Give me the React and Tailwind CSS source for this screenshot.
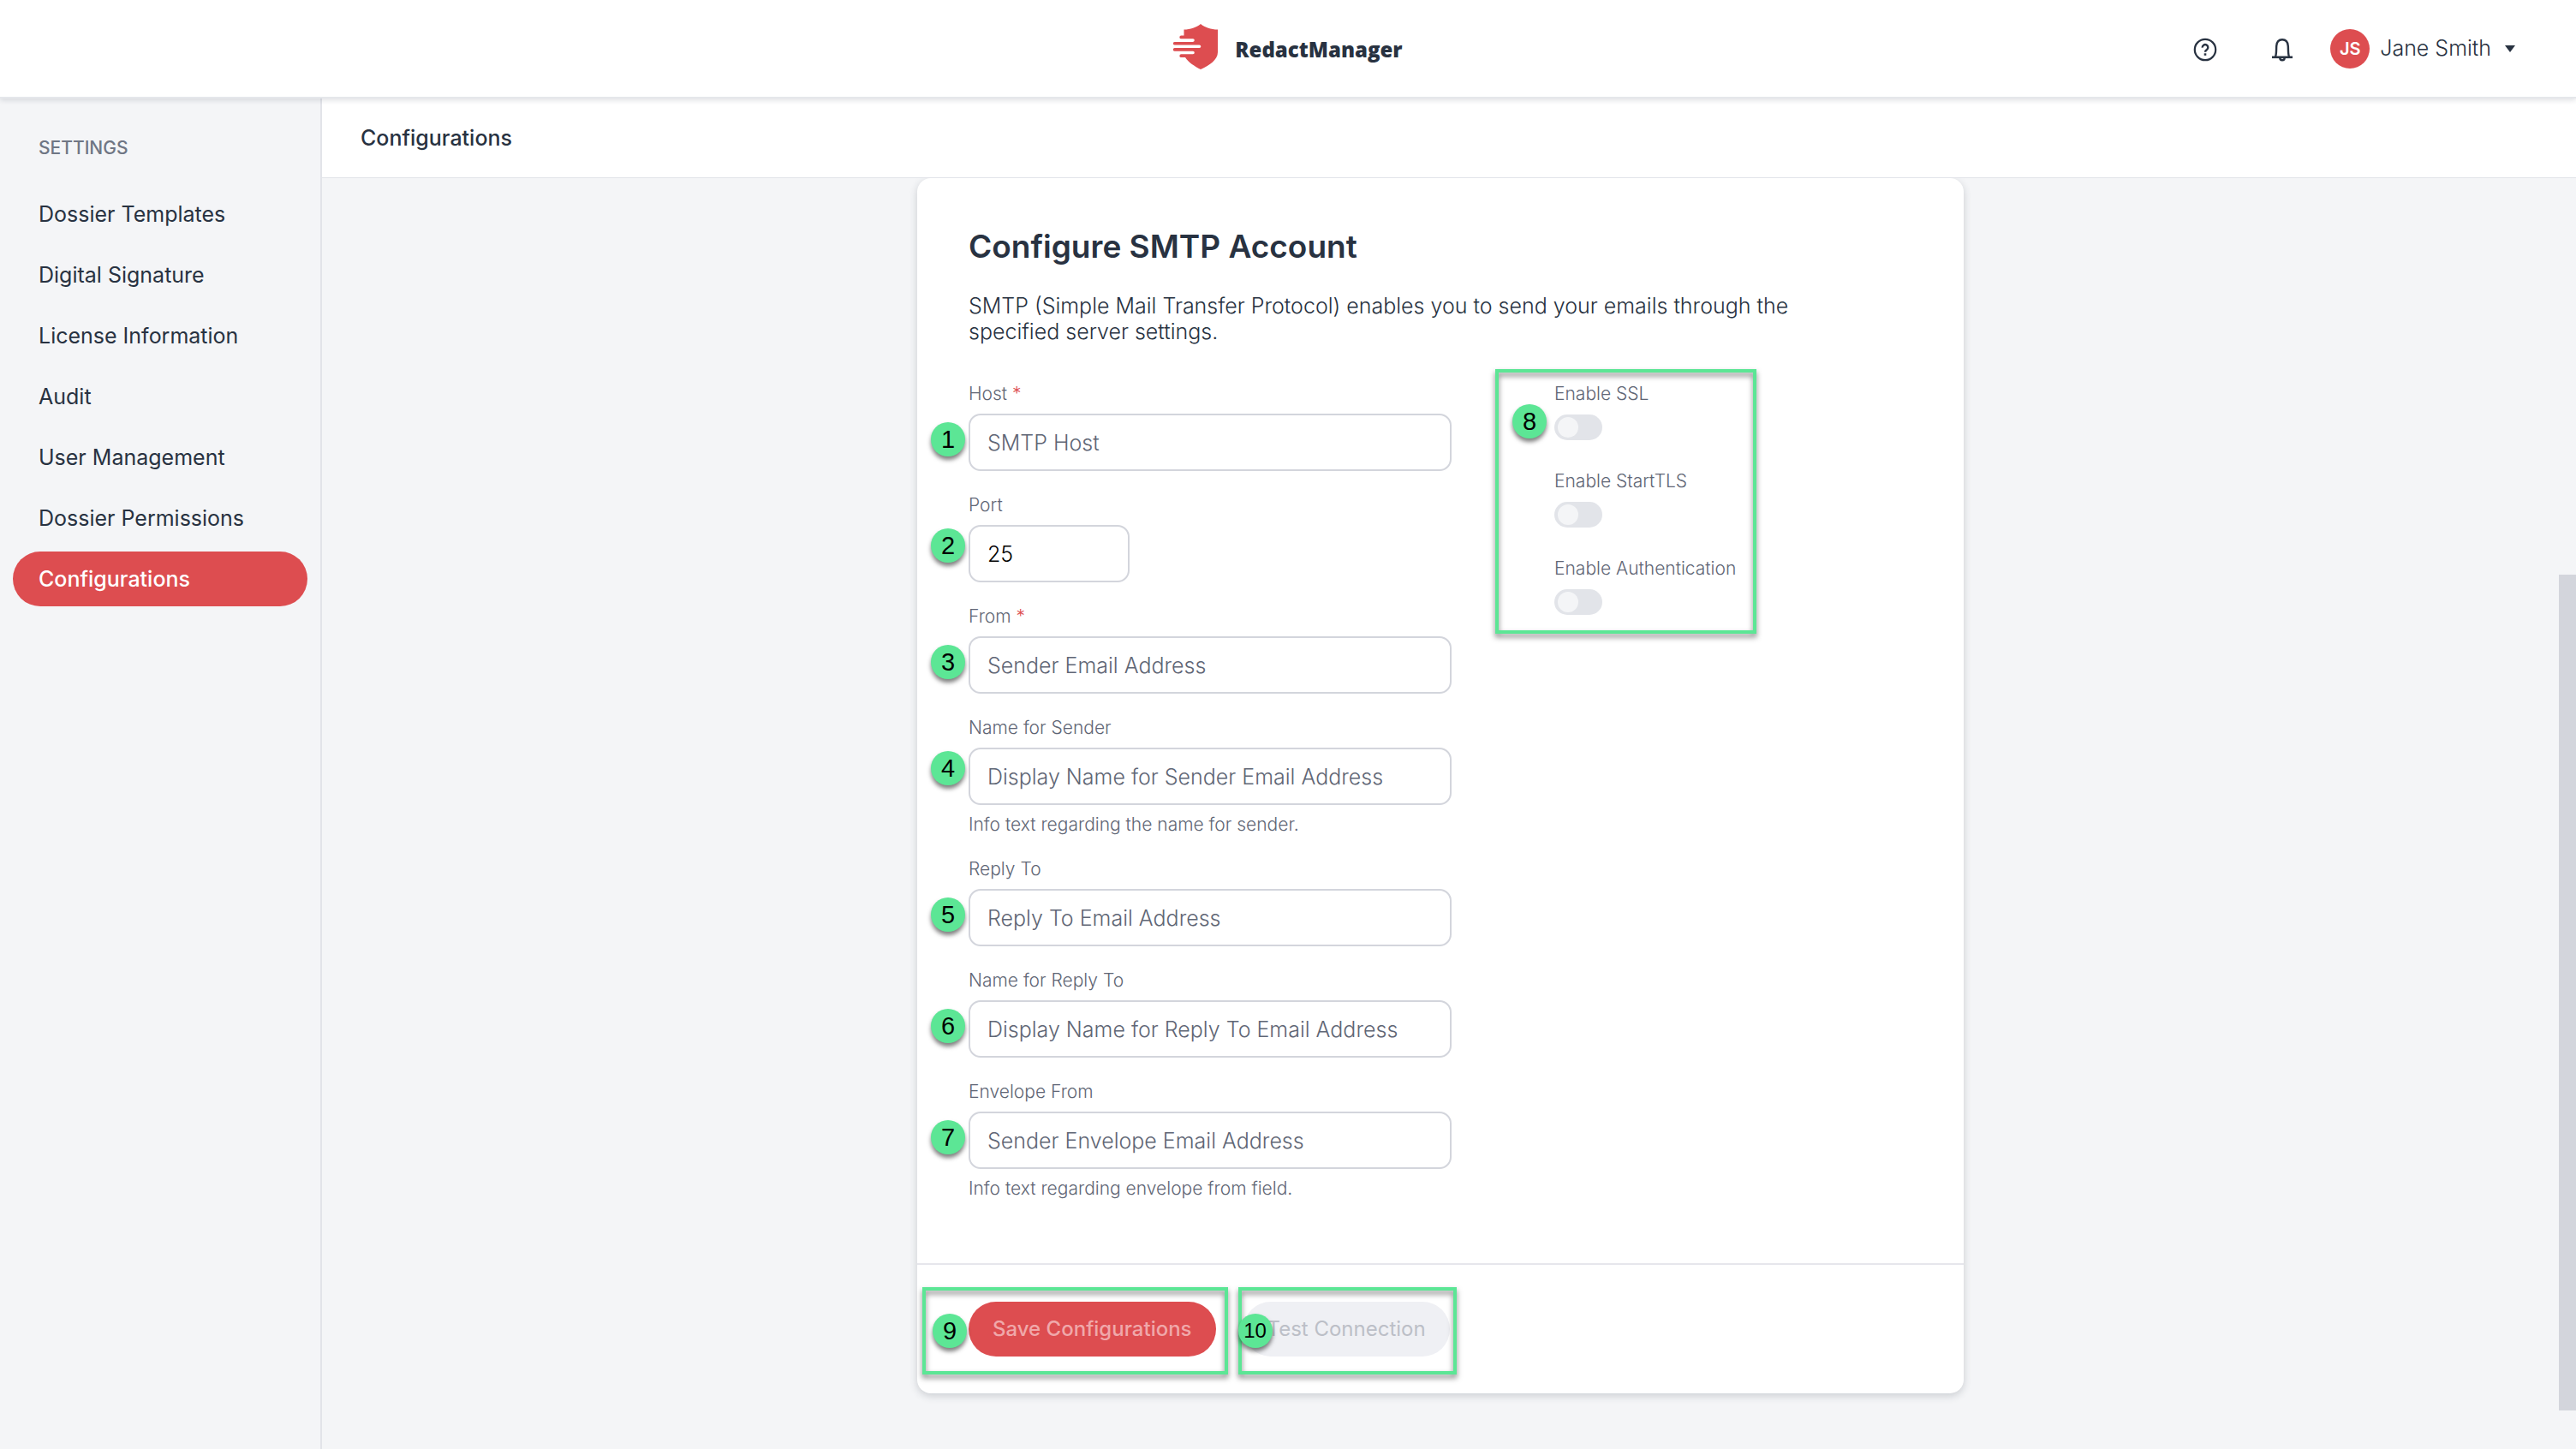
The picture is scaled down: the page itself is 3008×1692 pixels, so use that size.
import { useState } from 'react'

const NAV_ITEMS = [
  'Dossier Templates',
  'Digital Signature',
  'License Information',
  'Audit',
  'User Management',
  'Dossier Permissions',
  'Configurations',
]

const FIELDS = [
  { id: 'host', label: 'Host', required: true, placeholder: 'SMTP Host', note: 1 },
  { id: 'port', label: 'Port', value: '25', narrow: true, note: 2, noteHigh: true },
  { id: 'from', label: 'From', required: true, placeholder: 'Sender Email Address', note: 3 },
  {
    id: 'fromName',
    label: 'Name for Sender',
    placeholder: 'Display Name for Sender Email Address',
    hint: 'Info text regarding the name for sender.',
    note: 4,
    noteHigh: true,
  },
  { id: 'replyTo', label: 'Reply To', placeholder: 'Reply To Email Address', note: 5 },
  { id: 'replyToName', label: 'Name for Reply To', placeholder: 'Display Name for Reply To Email Address', note: 6 },
  {
    id: 'envelopeFrom',
    label: 'Envelope From',
    placeholder: 'Sender Envelope Email Address',
    hint: 'Info text regarding envelope from field.',
    note: 7,
  },
]

const TOGGLES = [
  { id: 'ssl', label: 'Enable SSL' },
  { id: 'starttls', label: 'Enable StartTLS' },
  { id: 'auth', label: 'Enable Authentication' },
]

function Logo() {
  return (
    <svg viewBox="0 0 52 53" className="w-[52px] h-[53px]" aria-hidden="true">
      <path
        d="M32 0C37 4 44 6.500 52 6.500V33C52 42 42 48.500 32 53C25 49.500 18 45 14 39H9.200a1.700 1.700 0 0 1 0-3.700H23a1.800 1.800 0 0 0 0-3.600H1.700a1.700 1.700 0 0 1 0-3.600H30.500a1.800 1.800 0 0 0 0-3.600H1.700a1.700 1.700 0 0 1 0-3.600H23a1.800 1.800 0 0 0 0-3.600H9.200a1.700 1.700 0 0 1 0-3.700H12.500V6.500C20 6.500 27 4 32 0Z"
        fill="#dd4d50"
      />
    </svg>
  )
}

function HelpIcon() {
  return (
    <svg viewBox="0 0 28 28" className="size-7" fill="none" stroke="currentColor" aria-hidden="true">
      <circle cx="14" cy="14" r="12.200" strokeWidth="2.200" />
      <path d="M10.700 11.600a3.300 3.300 0 1 1 5.200 2.500c-1.200.8-1.900 1.400-1.900 2.700" strokeWidth="2.400" />
      <path d="M14 18.300v2.500" strokeWidth="2.600" />
    </svg>
  )
}

function BellIcon() {
  return (
    <svg viewBox="0 0 24 28" className="w-6 h-7" fill="none" stroke="currentColor" aria-hidden="true">
      <path d="M4 22.300C5.300 19 4.900 15 5.200 9.800 5.500 5.200 8 2.200 12 2.200s6.500 3 6.800 7.600C19.100 15 18.700 19 20 22.300" strokeWidth="2.400" />
      <path d="M0 22.800H24" strokeWidth="2.600" />
      <path d="M9.300 23.500a2.700 2.700 0 0 0 5.400 0" strokeWidth="2.400" />
    </svg>
  )
}

function Note({ n, className }) {
  return (
    <span
      className={`absolute z-10 size-10 rounded-full bg-[#5ce695] text-black text-center font-['Liberation_Sans',sans-serif] leading-10 shadow-[0_4px_5px_rgba(0,0,0,0.5)] ${
        n > 9 ? 'text-2xl' : 'text-[29px]'
      } ${className}`}
    >
      {n}
    </span>
  )
}

function Outline({ className }) {
  return (
    <div
      className={`absolute pointer-events-none border-4 border-[#5ce695] drop-shadow-[0_4px_3px_rgba(0,0,0,0.5)] ${className}`}
    />
  )
}

function Field({ field }) {
  const [value, setValue] = useState(field.value ?? '')
  return (
    <div>
      <label htmlFor={field.id} className="block text-[21px] leading-6 font-light text-[#5f6675]">
        {field.label}
        {field.required && <span className="text-[#dd4d50]"> *</span>}
      </label>
      <div className="relative mt-[11px]">
        <Note n={field.note} className={field.noteHigh ? '-left-11 top-1' : '-left-11 top-2.5'} />
        <input
          id={field.id}
          type="text"
          value={value}
          placeholder={field.placeholder}
          onChange={(e) => setValue(e.target.value)}
          className={`block h-[67px] rounded-[14px] border-2 border-[#d3d5dc] bg-white px-5 text-[25px] font-light text-black placeholder:text-[#5f6675] outline-none ${
            field.narrow ? 'w-[188px]' : 'w-full'
          }`}
        />
      </div>
      {field.hint && <p className="mt-[11px] text-[21px] leading-6 font-light text-[#5f6675]">{field.hint}</p>}
    </div>
  )
}

function Toggle({ item }) {
  return (
    <div>
      <label htmlFor={item.id} className="block text-[21px] leading-6 font-light text-[#5f6675] whitespace-nowrap">
        {item.label}
      </label>
      <input
        id={item.id}
        type="checkbox"
        role="switch"
        className="mt-3 block h-[30px] w-14 appearance-none rounded-full bg-[#e2e4e9] px-1 py-[3px] before:block before:size-6 before:rounded-full before:bg-[#f4f5f7] checked:bg-[#dd4d50] checked:before:ml-auto"
      />
    </div>
  )
}

export default function App() {
  return (
    <div className="flex flex-col h-screen overflow-hidden bg-[#f4f5f7] font-[Inter,sans-serif] text-[#283241]">
      <header className="relative z-20 grid grid-cols-[1fr_auto_1fr] items-center h-[115px] shrink-0 bg-white border-b-2 border-[#e5e7eb] shadow-[0_2px_6px_rgba(40,50,65,0.15)]">
        <div />
        <a href="#" className="flex items-center gap-5 pb-1">
          <Logo />
          <span className="pt-1.5 font-['Open_Sans',sans-serif] font-extrabold text-2xl">RedactManager</span>
        </a>
        <div className="flex items-center justify-end pr-[71px]">
          <button type="button" aria-label="Help" className="mr-16 pt-0.5">
            <HelpIcon />
          </button>
          <button type="button" aria-label="Notifications" className="mr-11 pt-0.5">
            <BellIcon />
          </button>
          <button type="button" className="flex items-center">
            <span className="flex items-center justify-center size-[46px] rounded-full bg-[#dd4d50] text-white text-xl font-semibold">
              JS
            </span>
            <span className="ml-3 text-[25px] font-light">Jane Smith</span>
            <svg viewBox="0 0 12 8" className="ml-4 w-3 h-2" aria-hidden="true">
              <path d="M0 0H12L6 8Z" fill="currentColor" />
            </svg>
          </button>
        </div>
      </header>

      <div className="flex flex-1 min-h-0">
        <aside className="w-[376px] shrink-0 border-r-2 border-[#e2e4e9] px-[15px] pt-11">
          <h2 className="px-[30px] text-[21px] leading-7 font-medium text-[#6f7684]">SETTINGS</h2>
          <nav className="mt-[31px] flex flex-col gap-[7px]">
            {NAV_ITEMS.map((item) => (
              <a
                key={item}
                href="#"
                className={`rounded-full px-[30px] text-[25px] leading-[64px] whitespace-nowrap ${
                  item === 'Configurations' ? 'bg-[#dd4d50] text-white font-medium' : ''
                }`}
              >
                {item}
              </a>
            ))}
          </nav>
        </aside>

        <div className="flex flex-col flex-1 min-w-0">
          <div className="h-[93px] shrink-0 bg-white border-b border-[#e2e4e9] px-[45px]">
            <h1 className="text-[25px] leading-[92px] font-medium">Configurations</h1>
          </div>

          <main className="flex flex-1 min-h-0">
            <div className="flex-1 min-w-0 overflow-hidden">
              <form
                onSubmit={(e) => e.preventDefault()}
                className="mx-auto max-w-[1222px] rounded-[16px] bg-white shadow-[0_3px_10px_rgba(40,50,65,0.2)]"
              >
                <div className="px-[60px] pt-[56px] pb-[75px]">
                  <h2 className="text-[37px] leading-[48px] font-semibold">Configure SMTP Account</h2>
                  <p className="mt-[30px] max-w-[980px] text-[25px] leading-[30px] font-light">
                    SMTP (Simple Mail Transfer Protocol) enables you to send your emails through the specified server
                    settings.
                  </p>
                  <div className="mt-[46px] flex items-start gap-[120px]">
                    <div className="w-[564px] flex flex-col gap-7">
                      {FIELDS.map((field) => (
                        <Field key={field.id} field={field} />
                      ))}
                    </div>
                    <div className="relative flex flex-col gap-9">
                      <Outline className="-left-[69px] -right-[24px] -top-[17px] -bottom-[22px]" />
                      <Note n={8} className="-left-[49px] top-6" />
                      {TOGGLES.map((item) => (
                        <Toggle key={item.id} item={item} />
                      ))}
                    </div>
                  </div>
                </div>

                <div className="flex gap-8 border-t-2 border-[#e6e6ec] px-[60px] py-[43px]">
                  <div className="relative">
                    <Outline className="-left-[54px] -right-[14px] -top-[17px] -bottom-[21px]" />
                    <Note n={9} className="-left-[42px] top-3.5" />
                    <button
                      type="submit"
                      className="h-16 rounded-full bg-[#dd4d50] px-7 text-2xl font-medium text-[#f0a8aa]"
                    >
                      Save Configurations
                    </button>
                  </div>
                  <div className="relative">
                    <Outline className="-left-1.5 -right-2 -top-[17px] -bottom-[21px]" />
                    <Note n={10} className="-left-1.5 top-3.5" />
                    <button type="button" className="h-16 rounded-full bg-[#eff0f4] px-7 text-2xl text-[#bcbfc7]">
                      Test Connection
                    </button>
                  </div>
                </div>
              </form>
            </div>

            {/* scrollbar */}
            <div className="flex flex-col justify-end w-5 shrink-0 pb-[45px]">
              <div className="h-[976px] bg-[#d3d5dc]" />
            </div>
          </main>
        </div>
      </div>
    </div>
  )
}
